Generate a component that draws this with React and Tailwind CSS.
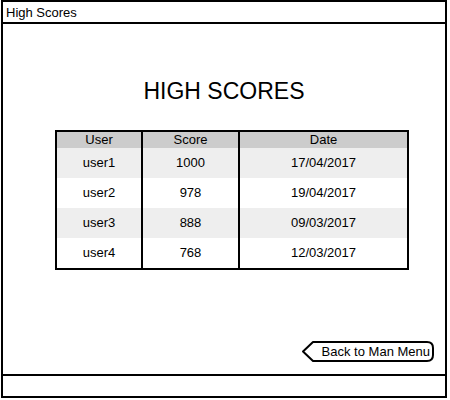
export default function App() {
  const rows = [
    ["user1", "1000", "17/04/2017"],
    ["user2", "978", "19/04/2017"],
    ["user3", "888", "09/03/2017"],
    ["user4", "768", "12/03/2017"],
  ];
  return (
    <div className="w-[450px] h-[400px] bg-white text-black" style={{ fontFamily: '"Liberation Sans", Arial, sans-serif' }}>
      <div className="ml-[1px] w-[446px] h-[398px] border-2 border-black flex flex-col">
        <div className="h-[22px] border-b-2 border-black flex items-center pl-[3px] text-[13px] leading-none">
          High Scores
        </div>
        <div className="flex-1 relative">
          <div className="mt-[54px] text-center text-[23px] leading-[26px]">HIGH SCORES</div>
          <div className="mt-[26px] ml-[52px] w-[354px] border-2 border-black text-[13px]">
            <div className="grid grid-cols-[86px_97px_1fr] h-[16px] bg-[#cccccc] leading-[16px] text-center">
              <div className="border-r-2 border-black">User</div>
              <div className="border-r-2 border-black">Score</div>
              <div>Date</div>
            </div>
            {rows.map((r, i) => (
              <div key={i} className={`grid grid-cols-[86px_97px_1fr] h-[30px] leading-[30px] text-center ${i % 2 === 0 ? "bg-[#eeeeee]" : "bg-white"}`}>
                <div className="border-r-2 border-black">{r[0]}</div>
                <div className="border-r-2 border-black">{r[1]}</div>
                <div>{r[2]}</div>
              </div>
            ))}
          </div>
          <div className="absolute left-[298px] top-[317px] w-[134px] h-[21px]">
            <svg className="absolute inset-0" width="134" height="21" viewBox="0 0 134 21">
              <path d="M12 1 H126 Q132 1 132 7 V14 Q132 20 126 20 H12 L2 10.5 Z" fill="white" stroke="black" strokeWidth="2" strokeLinejoin="round" />
            </svg>
            <div className="absolute inset-0 flex items-center justify-end pr-[5px] text-[13px] leading-none">Back to Man Menu</div>
          </div>
        </div>
        <div className="h-[22px] border-t-2 border-black"></div>
      </div>
    </div>
  );
}
